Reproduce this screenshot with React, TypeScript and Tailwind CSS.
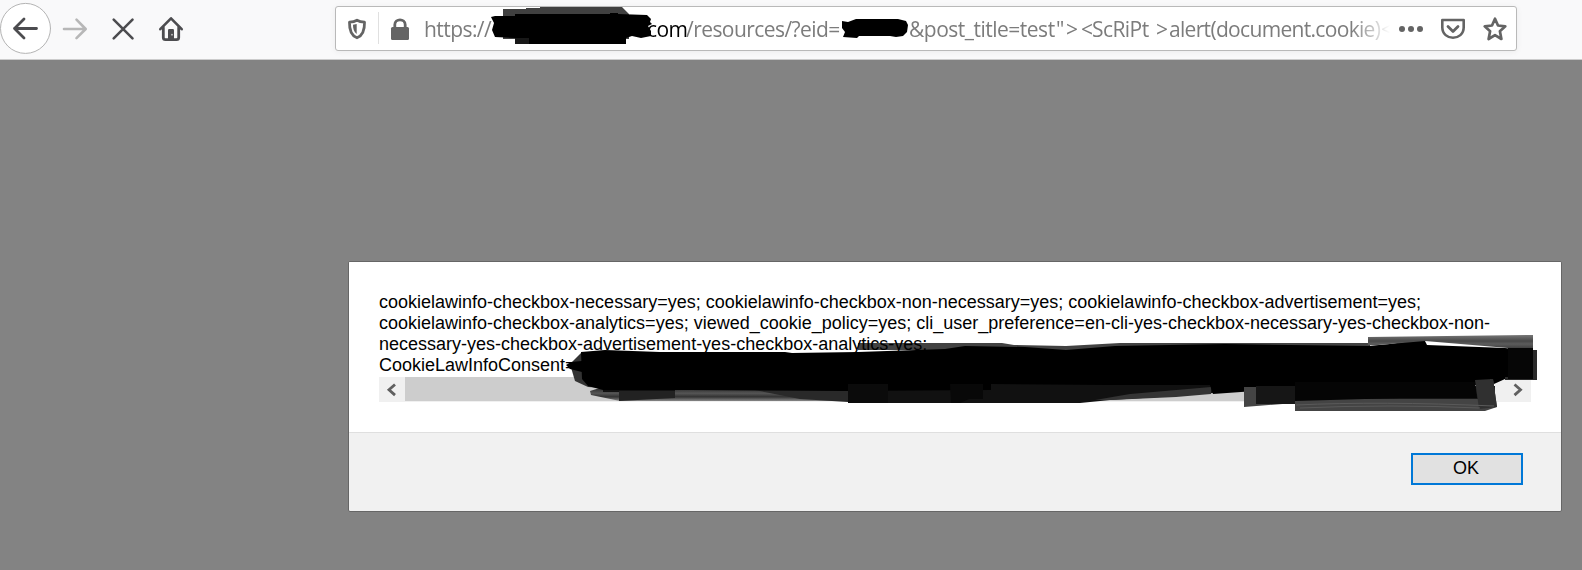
import React from 'react';

function ToolbarIcons() {
  return (
    <div className="flex h-[59px] w-[335px] shrink-0 items-start">
      <svg className="h-[59px] w-[200px]" viewBox="0 0 200 59" fill="none" strokeLinecap="round" strokeLinejoin="round">
        <circle cx="25.5" cy="28.4" r="25" fill="#ffffff" stroke="#b4b4b4" strokeWidth="1" />
        <path d="M36.5 28.5H14.5M24 19L14.5 28.5L24 38" stroke="#4c4c4f" strokeWidth="2.8" />
        <path d="M64 29H85.5M76.5 19.7L85.7 29L76.5 38.2" stroke="#b7b7b7" strokeWidth="2.6" />
        <path d="M113.7 19.7L132.5 38.3M132.5 19.7L113.7 38.3" stroke="#4c4c4f" strokeWidth="2.6" />
        <path d="M160.3 29.2L171 18.3L181.7 29.2" stroke="#4c4c4f" strokeWidth="2.6" />
        <path d="M163.3 27.5V37.5Q163.3 39.7 165.5 39.7H176.5Q178.7 39.7 178.7 37.5V27.5" stroke="#4c4c4f" strokeWidth="2.8" />
        <path d="M168 40V30.2Q168 29 169.2 29H172.8Q174 29 174 30.2V40Z" fill="#4c4c4f" />
        <circle cx="172" cy="34.7" r="0.9" fill="#c8c8c8" />
      </svg>
    </div>
  );
}

function AddressBar() {
  return (
    <div className="mt-[6px] flex h-[45px] w-[1182px] shrink-0 overflow-hidden rounded-[3px] border border-[#b9b9b9] bg-white shadow-[0_1px_6px_rgba(0,0,0,0.06)]">
      <svg className="h-[43px] w-[80px] shrink-0" viewBox="336 7 80 43" fill="none">
        <path d="M357 20.2C354.5 21.6 352 22 349.5 22.2C349.3 29.5 350.6 35.3 357 37.8C363.4 35.3 364.7 29.5 364.5 22.2C362 22 359.5 21.6 357 20.2Z" stroke="#646464" strokeWidth="2.8" strokeLinejoin="round" />
        <path d="M356.7 24V34C353.8 31.8 353 28.8 353 24.8Z" fill="#646464" />
        <path d="M378.5 12V44" stroke="#e0e0e0" />
        <rect x="391" y="27" width="18" height="13" rx="1.5" fill="#646464" />
        <path d="M394.8 28V24.7C394.8 18.2 405.2 18.2 405.2 24.7V28" stroke="#646464" strokeWidth="2.8" />
      </svg>
      <div className="flex h-[43px] w-[974px] shrink-0 overflow-hidden whitespace-pre pl-2 font-['Open_Sans',sans-serif] text-[21px] leading-[45px] tracking-[-0.56px] text-[#7c7c7c] [mask-image:linear-gradient(to_right,black_935px,transparent_974px)]">
        <span className="w-[223px] shrink-0">https://</span>
        <span className="w-[39px] shrink-0 text-black">com</span>
        <span className="w-[223px] shrink-0">/resources/?eid=</span>
        <span className="w-[147px] shrink-0 tracking-[-0.5px]">&amp;post_title=test</span>
        <span className="w-[10px] shrink-0">"</span>
        <span className="w-[15px] shrink-0">&gt;</span>
        <span className="w-[11px] shrink-0">&lt;</span>
        <span className="w-[64px] shrink-0">ScRiPt </span>
        <span className="w-[13px] shrink-0">&gt;</span>
        <span className="w-[212px] shrink-0 tracking-[-0.68px]">alert(document.cookie)</span>
        <span className="shrink-0">&lt;</span>
      </div>
      <svg className="h-[43px] w-[126px] shrink-0" viewBox="1390 7 126 43" fill="none" stroke="#646464" strokeLinecap="round" strokeLinejoin="round">
        <g fill="#646464" stroke="none"><circle cx="1402" cy="29" r="3" /><circle cx="1411" cy="29" r="3" /><circle cx="1420" cy="29" r="3" /></g>
        <path d="M1442.3 20H1463.7V27.3C1463.7 41.2 1442.3 41.2 1442.3 27.3Z" strokeWidth="2.6" />
        <path d="M1448 26.5L1453 31.5L1458 26.5" strokeWidth="2.8" />
        <path d="M1495 18.7L1498 25.5L1505.3 26.3L1499.9 31.3L1501.4 39L1495 35.2L1488.6 39L1490.1 31.3L1484.7 26.3L1492 25.5Z" strokeWidth="2.7" />
      </svg>
    </div>
  );
}

function ScrollBar() {
  return (
    <div className="mt-px flex h-[25px] w-[1152px] bg-[#f0f0f0]">
      <svg className="h-[25px] w-[26px] shrink-0" viewBox="0 0 26 25" fill="none" stroke="#606060" strokeWidth="2.8">
        <path d="M16 7.5L10 12.8L16 18.1" />
      </svg>
      <div className="h-6 w-[900px] bg-[#cdcdcd]" />
      <div className="grow" />
      <svg className="h-[25px] w-[26px] shrink-0" viewBox="0 0 26 25" fill="none" stroke="#606060" strokeWidth="2.8">
        <path d="M9.5 7.5L15.5 12.8L9.5 18.1" />
      </svg>
    </div>
  );
}

function AlertDialog() {
  return (
    <div className="ml-[348px] mt-[201px] flex h-[251px] w-[1214px] flex-col overflow-hidden rounded-[2px] border border-[#666666] bg-[#f1f1f1] font-['Liberation_Sans',Arial,sans-serif] text-[18px] text-black">
      <div className="h-[170px] shrink-0 bg-white pl-[30px] pt-[30px]">
        <div className="h-[84px] whitespace-pre leading-[21px]">
          <div>cookielawinfo-checkbox-necessary=yes; cookielawinfo-checkbox-non-necessary=yes; cookielawinfo-checkbox-advertisement=yes;</div>
          <div>cookielawinfo-checkbox-analytics=yes; viewed_cookie_policy=yes; cli_user_preference=en-cli-yes-checkbox-necessary-yes-checkbox-non-</div>
          <div>necessary-yes-checkbox-advertisement-yes-checkbox-analytics-yes;</div>
          <div>CookieLawInfoConsent=e</div>
        </div>
        <ScrollBar />
      </div>
      <div className="flex grow items-start justify-end border-t border-[#dfdfdf] pr-[38px] pt-[20px]">
        <button className="h-8 w-[112px] border-2 border-[#0078d7] bg-[#e1e1e1] pb-px pr-0.5 leading-[25px]">OK</button>
      </div>
    </div>
  );
}

function Redactions() {
  return (
    <svg className="pointer-events-none absolute left-0 top-0 h-[570px] w-[1582px]" viewBox="0 0 1582 570">
      <defs>
        <linearGradient id="smear" x1="0" y1="0" x2="0" y2="1">
          <stop offset="0" stopColor="#222" />
          <stop offset="0.45" stopColor="#555" />
          <stop offset="0.7" stopColor="#333" />
          <stop offset="1" stopColor="#888" />
        </linearGradient>
        <linearGradient id="smearTop" x1="0" y1="0" x2="0" y2="1">
          <stop offset="0" stopColor="#777" />
          <stop offset="0.4" stopColor="#484848" />
          <stop offset="0.6" stopColor="#5c5c5c" />
          <stop offset="1" stopColor="#333" />
        </linearGradient>
      </defs>
      <path d="M503 9H526V8H540V7H622L629 14V39H503Z" fill="#404040" />
      <path d="M515 14H610V13H618V14L647 15L651 19L650 22L652 24L648 26L651 31V36L641 38L632 36L626 38V44H529L515 43V38L495 37L492 30L494 23L491 17L495 16H515Z" fill="#000" />
      <path d="M515 38H529V44H515Z" fill="#181818" />
      <path d="M842 21L848 22L856 19H898L906 21L908 25L907 32L903 36L896 37L890 36H859L857 38L843 37L845 32L842 28Z" fill="#000" />

      <path d="M570 364L582 352L605 352V388L588 387L575 381Z" fill="#333" />
      <path d="M566 365L571 362L582 361V372L570 369Z" fill="#000" />
      <path d="M590 391L603 387H950V401H620L591 395Z" fill="url(#smear)" />
      <path d="M603 384H675V398H619V392H603Z" fill="#111" />
      <path d="M619 391H675V398L619 401Z" fill="#222" />
      <path d="M750 389L950 384V403L848 402L800 399Z" fill="#292929" />
      <path d="M858 343H1002L1014 345L1066 346L1120 343H1370V350H858Z" fill="#000" fillOpacity="0.74" />
      <path d="M848 380H1213V393L1176 396L1110 400L1080 403H848Z" fill="#111111" />
      <path d="M1095 400L1130 394L1211 387V394L1176 397L1110 400Z" fill="#343434" />
      <path d="M581 352L605 350L660 352L785 352L792 353L858 352L945 349L965 346L1025 347L1066 350L1115 346L1225 344L1368 346L1390 344L1411 341L1425 341L1427 345L1505 348L1531 351V378L1505 379L1494 384L1492 385L1330 385L1295 390L1255 391L1213 394L1210 385L1110 385L991 384V390L846 391L690 390L603 390L588 386L582 379Z" fill="#000" />
      <path d="M1368 337L1533 335V350L1508 348L1425 341L1378 345H1368Z" fill="url(#smearTop)" />
      <path d="M1529 350H1537V380H1505V377H1529Z" fill="#2a2a2a" />
      <path d="M1508 348H1533V379H1508Z" fill="#060606" />
      <path d="M1244 387H1295V403L1244 407Z" fill="#444" />
      <path d="M1256 386H1495V402L1295 404L1256 404Z" fill="#161616" />
      <path d="M1295 399H1490V379H1493L1497 407L1485 411H1295Z" fill="#444" />
      <path d="M1295 382H1475L1477 398H1400L1295 401Z" fill="#050505" />
      <path d="M1475 380L1493 379L1497 407L1479 409Z" fill="#303030" />
      <path d="M1296 405Q1380 401 1494 406M1300 408Q1390 404 1480 408" fill="none" stroke="#5a5a5a" strokeWidth="1" />
      <path d="M950 384H983V399H969L960 403H951Z" fill="#080808" />
      <path d="M848 384H888V403H848Z" fill="#0b0b0b" />
    </svg>
  );
}

export default function App() {
  return (
    <div className="relative h-[570px] w-[1582px] overflow-hidden bg-[#838383]">
      <header className="flex h-[60px] border-b border-[#cccccc] bg-[#f9f9fa]">
        <ToolbarIcons />
        <AddressBar />
      </header>
      <AlertDialog />
      <Redactions />
    </div>
  );
}
